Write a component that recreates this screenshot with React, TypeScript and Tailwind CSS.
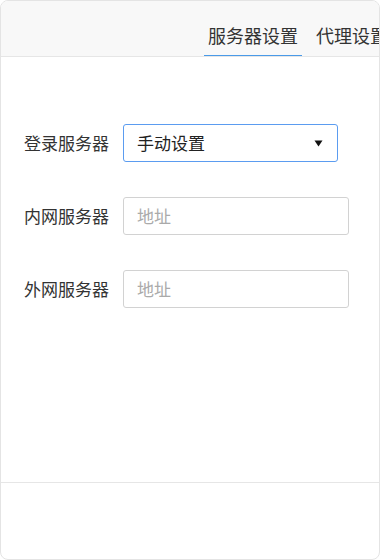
import React from "react";

const font = { fontFamily: '"Noto Sans CJK SC", "Noto Sans", sans-serif' };

export default function App() {
  return (
    <div className="w-[380px] h-[560px] bg-white" style={font}>
      <div className="w-full h-full box-border border border-[#e4e4e4] rounded-[8px] overflow-hidden flex flex-col">
        <div className="h-[56px] shrink-0 bg-[#f8f8f8] border-b border-[#e6e6e6] flex pl-[203px] overflow-hidden whitespace-nowrap">
          <div className="relative px-[4px] pt-[21px] text-[18px] leading-[26px] text-[#333]">
            服务器设置
            <div className="absolute left-0 right-0 bottom-[-1px] h-[2px] bg-[#4a9ae8]" />
          </div>
          <div className="ml-[10px] px-[4px] pt-[21px] text-[18px] leading-[26px] text-[#333]">
            代理设置
          </div>
        </div>
        <div className="flex-1 pt-[67px] flex flex-col gap-[35px]">
          <div className="flex items-center">
            <div className="w-[122px] pl-[23px] text-[17px] text-[#333] shrink-0 whitespace-nowrap">登录服务器</div>
            <div className="w-[215px] h-[38px] box-border border border-[#5b9cf0] rounded-[3px] flex items-center justify-between pl-[13px] pr-[14px] text-[17px] text-[#222]">
              <span>手动设置</span>
              <svg width="9" height="7" viewBox="0 0 9 7">
                <path d="M0.5 0.5 L8.5 0.5 L4.5 6.5 Z" fill="#111" />
              </svg>
            </div>
          </div>
          <div className="flex items-center">
            <div className="w-[122px] pl-[23px] text-[17px] text-[#333] shrink-0 whitespace-nowrap">内网服务器</div>
            <div className="w-[226px] h-[38px] box-border border border-[#d2d2d2] rounded-[3px] flex items-center pl-[13px] text-[17px] text-[#aaa]">
              地址
            </div>
          </div>
          <div className="flex items-center">
            <div className="w-[122px] pl-[23px] text-[17px] text-[#333] shrink-0 whitespace-nowrap">外网服务器</div>
            <div className="w-[226px] h-[38px] box-border border border-[#d2d2d2] rounded-[3px] flex items-center pl-[13px] text-[17px] text-[#aaa]">
              地址
            </div>
          </div>
        </div>
        <div className="h-[77px] shrink-0 border-t border-[#e6e6e6]" />
      </div>
    </div>
  );
}
